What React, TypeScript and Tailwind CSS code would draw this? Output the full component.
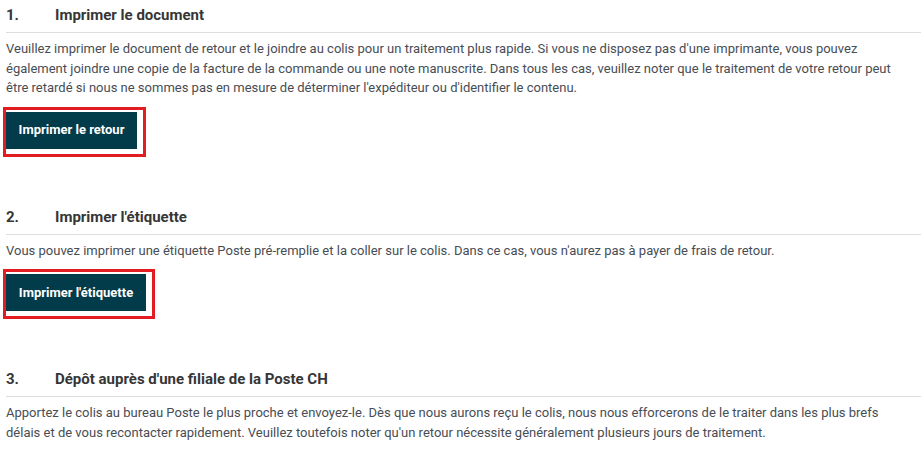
import React from "react";

function Section({
  num,
  title,
  children,
}: {
  num: string;
  title: string;
  children: React.ReactNode;
}) {
  return (
    <section>
      <div className="flex h-[20px] items-center text-[15px] font-bold leading-[20px] text-[#363636]">
        <span className="w-[49px]">{num}</span>
        <span>{title}</span>
      </div>
      <div className="mt-[7px] h-px bg-[#dddddd] mr-[-6px]" />
      {children}
    </section>
  );
}

function RedButton({ label, w }: { label: string; w: string }) {
  return (
    <div className="relative mt-[14px] inline-block">
      <button
        className={`h-[37px] ${w} bg-[#023b49] text-[13px] font-bold text-white`}
      >
        {label}
      </button>
      <div className="pointer-events-none absolute left-[-3px] right-[-9px] top-[-5px] bottom-[-8px] border-[3.5px] border-[#e21c21]" />
    </div>
  );
}

export default function App() {
  return (
    <div
      className="w-[921px] h-[452px] overflow-hidden bg-white px-[6px] pt-[5px] text-[#474d55]"
      style={{ fontFamily: "Roboto, 'Liberation Sans', sans-serif" }}
    >
      <Section num="1." title="Imprimer le document">
        <p className="mt-[6px] text-[13px] leading-[19.5px]">
          Veuillez imprimer le document de retour et le joindre au colis pour un
          traitement plus rapide. Si vous ne disposez pas d'une imprimante, vous
          pouvez également joindre une copie de la facture de la commande ou une
          note manuscrite. Dans tous les cas, veuillez noter que le traitement de
          votre retour peut être retardé si nous ne sommes pas en mesure de
          déterminer l'expéditeur ou d'identifier le contenu.
        </p>
        <RedButton label="Imprimer le retour" w="w-[131px]" />
      </Section>
      <div className="h-[58px]" />
      <Section num="2." title="Imprimer l'étiquette">
        <p className="mt-[6px] text-[13px] leading-[19.5px]">
          Vous pouvez imprimer une étiquette Poste pré-remplie et la coller sur le
          colis. Dans ce cas, vous n'aurez pas à payer de frais de retour.
        </p>
        <RedButton label="Imprimer l'étiquette" w="w-[140px]" />
      </Section>
      <div className="h-[58px]" />
      <Section num="3." title="Dépôt auprès d'une filiale de la Poste CH">
        <p className="mt-[6px] text-[13px] leading-[19.5px]">
          Apportez le colis au bureau Poste le plus proche et envoyez-le. Dès que
          nous aurons reçu le colis, nous nous efforcerons de le traiter dans les
          plus brefs délais et de vous recontacter rapidement. Veuillez toutefois
          noter qu'un retour nécessite généralement plusieurs jours de traitement.
        </p>
      </Section>
    </div>
  );
}
